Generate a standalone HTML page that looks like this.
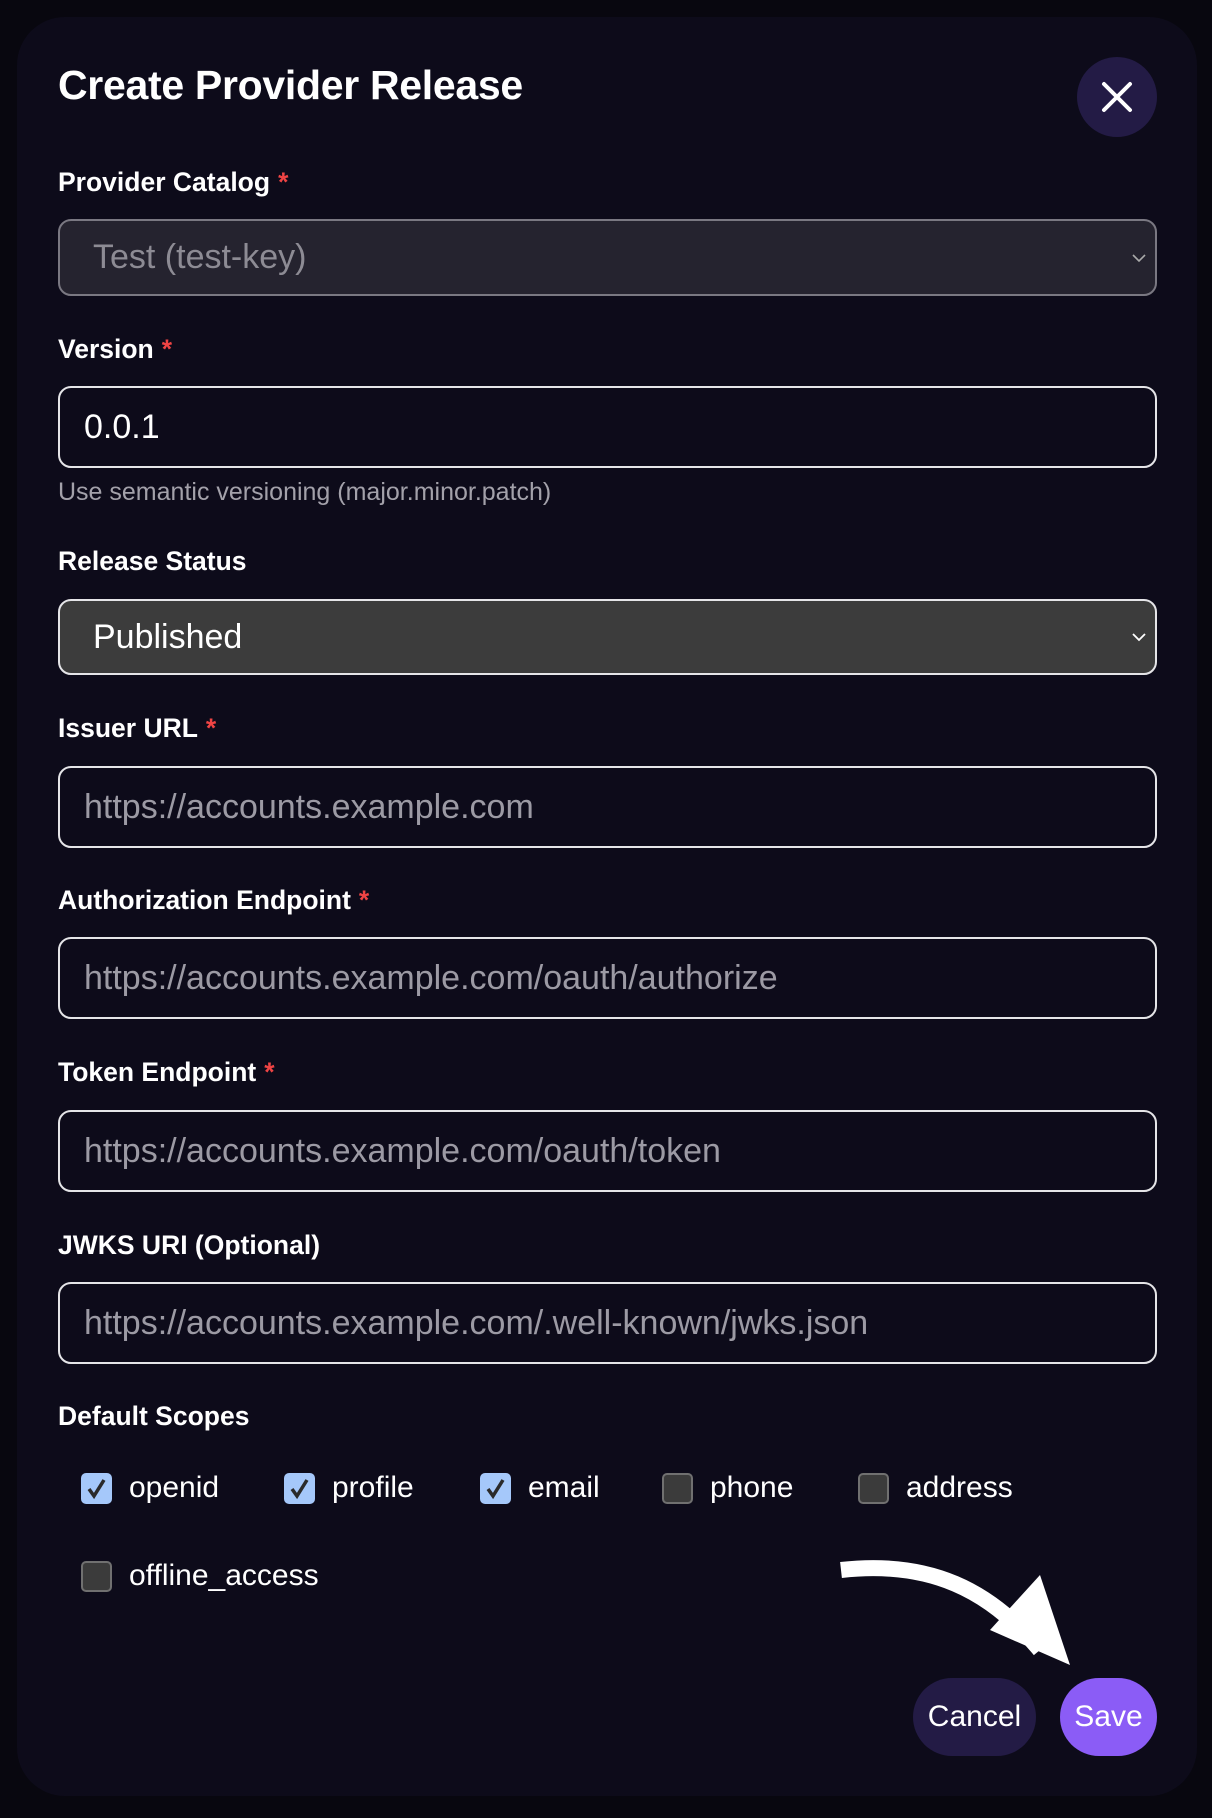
<!DOCTYPE html>
<html><head><meta charset="utf-8"><style>
*{box-sizing:border-box;margin:0;padding:0}
body{width:1212px;height:1818px;background:#08070f;font-family:"Liberation Sans",sans-serif;color:#fff;position:relative;overflow:hidden}
.modal{position:absolute;left:17px;top:17px;width:1180px;height:1779px;background:#0d0b1a;border-radius:48px}
.abs{position:absolute}
h1{position:absolute;left:58px;top:62px;font-size:41px;font-weight:bold;letter-spacing:-0.3px}
.close{position:absolute;left:1077px;top:57px;width:80px;height:80px;border-radius:50%;background:#231b45}
.lbl{position:absolute;left:58px;font-size:26.5px;font-weight:bold;line-height:30px}
.lbl .r{color:#ef4444;margin-left:8px}
.box{position:absolute;left:58px;width:1099px;border-radius:13px;border:2px solid #e5e5e8;background:#0d0b1a;font-size:34px;padding-left:24px;display:flex;align-items:center}
.ph{color:#9c9aa4}
.help{position:absolute;left:58px;top:478px;font-size:25px;color:#a3a1aa}
.cb{position:absolute;width:31px;height:31px;border-radius:5px}
.on{background:#a5c8fa}
.off{background:#3b3b3b;border:2px solid #707070}
.ct{position:absolute;font-size:30px;line-height:36px}
.btn{position:absolute;top:1678px;height:78px;border-radius:39px;font-size:30px;display:flex;align-items:center;justify-content:center}
.chev{position:absolute;right:8px;top:50%;margin-top:-5px}
</style></head><body>
<div class="modal"></div>
<h1>Create Provider Release</h1>
<div class="close"><svg width="80" height="80"><path d="M27 27L53 53M53 27L27 53" stroke="#fff" stroke-width="4" stroke-linecap="round"/></svg></div>

<div class="lbl" style="top:167px">Provider Catalog<span class="r">*</span></div>
<div class="box" style="top:219px;height:77px;background:#25232f;border-color:#7a7882;padding-left:33px"><span style="color:#8d8b94">Test (test-key)</span><svg class="chev" width="16" height="10"><path d="M2 2L8 8L14 2" stroke="#aaa" stroke-width="1.6" fill="none"/></svg></div>

<div class="lbl" style="top:334px">Version<span class="r">*</span></div>
<div class="box" style="top:386px;height:82px">0.0.1</div>
<div class="help">Use semantic versioning (major.minor.patch)</div>

<div class="lbl" style="top:546px">Release Status</div>
<div class="box" style="top:599px;height:76px;background:#3c3c3c;padding-left:33px">Published<svg class="chev" width="16" height="10"><path d="M2 2L8 8L14 2" stroke="#fff" stroke-width="1.8" fill="none"/></svg></div>

<div class="lbl" style="top:713px">Issuer URL<span class="r">*</span></div>
<div class="box" style="top:766px;height:82px"><span class="ph">https://accounts.example.com</span></div>

<div class="lbl" style="top:885px">Authorization Endpoint<span class="r">*</span></div>
<div class="box" style="top:937px;height:82px"><span class="ph">https://accounts.example.com/oauth/authorize</span></div>

<div class="lbl" style="top:1057px">Token Endpoint<span class="r">*</span></div>
<div class="box" style="top:1110px;height:82px"><span class="ph">https://accounts.example.com/oauth/token</span></div>

<div class="lbl" style="top:1230px">JWKS URI (Optional)</div>
<div class="box" style="top:1282px;height:82px"><span class="ph">https://accounts.example.com/.well-known/jwks.json</span></div>

<div class="lbl" style="top:1401px">Default Scopes</div>

<div class="cb on" style="left:81px;top:1473px"><svg width="31" height="31"><path d="M8 16L13 23L23 7" stroke="#2a2a2a" stroke-width="3.5" fill="none"/></svg></div>
<div class="ct" style="left:129px;top:1470px">openid</div>
<div class="cb on" style="left:284px;top:1473px"><svg width="31" height="31"><path d="M8 16L13 23L23 7" stroke="#2a2a2a" stroke-width="3.5" fill="none"/></svg></div>
<div class="ct" style="left:332px;top:1470px">profile</div>
<div class="cb on" style="left:480px;top:1473px"><svg width="31" height="31"><path d="M8 16L13 23L23 7" stroke="#2a2a2a" stroke-width="3.5" fill="none"/></svg></div>
<div class="ct" style="left:528px;top:1470px">email</div>
<div class="cb off" style="left:662px;top:1473px"></div>
<div class="ct" style="left:710px;top:1470px">phone</div>
<div class="cb off" style="left:858px;top:1473px"></div>
<div class="ct" style="left:906px;top:1470px">address</div>
<div class="cb off" style="left:81px;top:1561px"></div>
<div class="ct" style="left:129px;top:1558px">offline_access</div>

<svg class="abs" style="left:0;top:0" width="1212" height="1818">
<path d="M841 1570 C930 1560 990 1590 1040 1650" stroke="#fff" stroke-width="16" fill="none"/>
<path d="M1040 1575 L1070 1665 L990 1630 Z" fill="#fff"/>
</svg>

<div class="btn" style="left:913px;width:123px;background:#231b45">Cancel</div>
<div class="btn" style="left:1060px;width:97px;background:#8b5cf6">Save</div>
</body></html>
